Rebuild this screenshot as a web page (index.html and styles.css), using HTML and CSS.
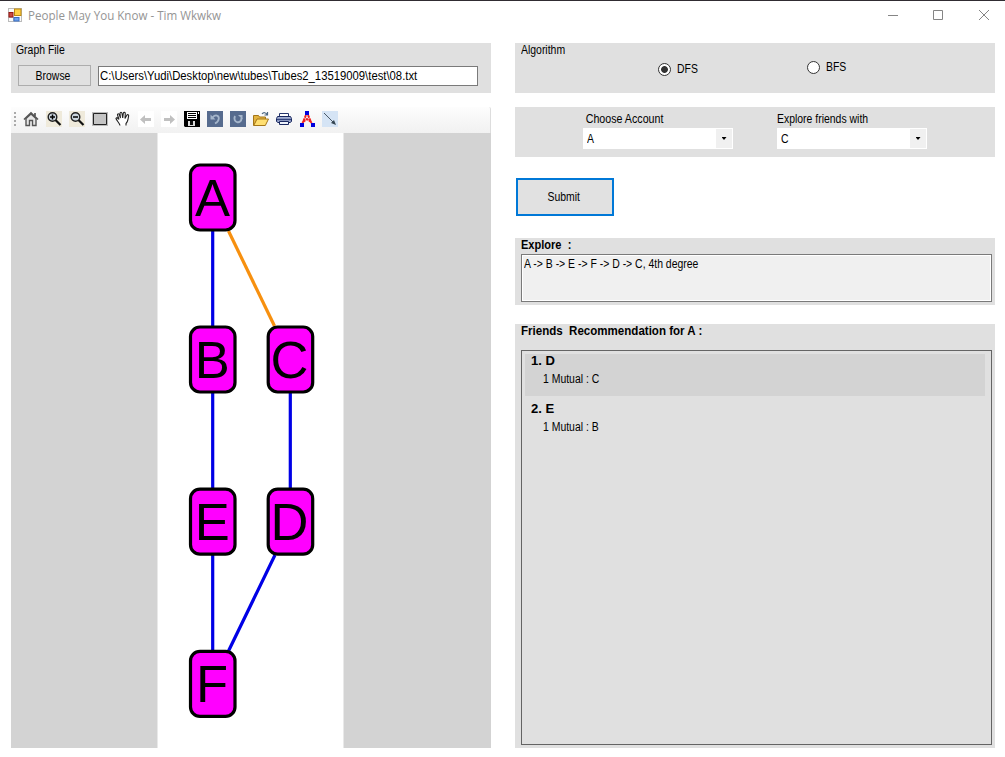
FILE: index.html
```html
<!DOCTYPE html>
<html lang="en">
<head>
<meta charset="utf-8">
<title>People May You Know - Tim Wkwkw</title>
<link rel="stylesheet" href="styles.css">
</head>
<body>
<div class="window">
  <header class="titlebar">
    <svg class="app-icon" width="14" height="14" viewBox="0 0 14 14">
      <rect x=".5" y=".5" width="13" height="13" fill="#fafafa" stroke="#bbb"/>
      <path d="M1 9.5h6M5.5 9v4" stroke="#bbb"/>
      <rect x="1" y="4.500" width="4" height="4.500" fill="#c84a42" stroke="#981914"/>
      <rect x="6.500" y="1" width="6.500" height="6.500" fill="#ffd044" stroke="#bd8911"/>
      <rect x="6" y="9.500" width="5" height="3.500" fill="#70a2ec" stroke="#396fc5"/>
    </svg>
    <h1 class="title"><span class="title-text">People May You Know - Tim Wkwkw</span></h1>
    <svg class="controls" width="104" height="12" viewBox="0 0 104 12" fill="none" stroke="#858585">
      <path d="M1 6.500h10M46.500 1.500h9v9h-9zM92 1l10 10M102 1L92 11"/>
    </svg>
  </header>

  <main class="content">
    <section class="left">
      <div class="panel file-panel">
        <div class="caption"><span class="t">Graph File</span></div>
        <div class="file-row">
          <button class="browse"><span class="t mid">Browse</span></button>
          <div class="path"><span class="t path-text">C:\Users\Yudi\Desktop\new\tubes\Tubes2_13519009\test\08.txt</span></div>
        </div>
      </div>
      <div class="viewer">
        <div class="toolbar">
          <svg class="grip" width="2" height="16" viewBox="0 0 2 16"><path d="M1 1v15" stroke="#aaa" stroke-width="2" stroke-dasharray="2 2"/></svg>
          <svg class="tool" viewBox="0 0 16 16"><path d="M3 7.500v7h3.500v-5h3v5H13v-7L8 3z" fill="#e6e6e6" stroke="#555" stroke-width="1.400"/><path d="M1 8.500L8 2l7 6.500M12 2v3" fill="none" stroke="#555" stroke-width="1.700"/></svg>
          <svg class="tool" viewBox="0 0 16 16"><path d="M0 0h16v16H0z" fill="#efeadb"/><circle cx="6.500" cy="6" r="4.300" fill="#ccd6df" stroke="#222" stroke-width="1.400"/><path d="M4 6h5M6.500 3.500v5" stroke="#000" stroke-width="1.500"/><path d="M9.500 9l5 5" stroke="#111" stroke-width="2.200"/></svg>
          <svg class="tool" viewBox="0 0 16 16"><path d="M0 0h16v16H0z" fill="#efeadb"/><circle cx="6.500" cy="6" r="4.300" fill="#ccd6df" stroke="#222" stroke-width="1.400"/><path d="M4 6h5" stroke="#000" stroke-width="1.500"/><path d="M9.500 9l5 5" stroke="#111" stroke-width="2.200"/></svg>
          <svg class="tool" viewBox="0 0 16 16"><path d="M0 1h16v14H0z" fill="#bbb"/><path d="M1.500 2.500h13v11h-13z" fill="#c4c4c4" stroke="#222"/></svg>
          <svg class="tool" viewBox="0 0 16 16"><path d="M5 14.500C4.500 12 1.500 9.500 1 7.500c.5-1.500 2-.5 3 1L2.500 4c0-1.700 1.600-1.700 2 0L5.500 7 5 2.500c.2-1.600 1.800-1.600 2 0L7.700 7l.6-4.700c.4-1.500 2-1.200 2 .4L10 7.500l1.800-3.200c.8-1.300 2.200-.6 1.800.8C13 8 13 11 11 12.500v2" fill="#fff" stroke="#222" stroke-width="1.100"/></svg>
          <svg class="tool" viewBox="0 0 16 16"><path d="M0 0h16v16H0z" fill="#fff"/><path d="M2 8.500L7 4v3h6v3H7v3z" fill="#c0c0c0"/></svg>
          <svg class="tool" viewBox="0 0 16 16"><path d="M0 0h16v16H0z" fill="#fff"/><path d="M14 8.500L9 4v3H3v3h6v3z" fill="#c0c0c0"/></svg>
          <svg class="tool" viewBox="0 0 16 16"><path d="M0 0h16v16H1l-1-1z" fill="#000"/><path d="M3 1h10v7H3z" fill="#fff"/><path d="M4 2.500h8M4 4.500h8M4 6.500h8" stroke="#000"/><path d="M4 10h7v5H4z" fill="#ddd"/><path d="M6 10h3v4H6z" fill="#111"/><path d="M14 1h1v2h-1z" fill="#fff"/></svg>
          <svg class="tool" viewBox="0 0 16 16"><path d="M0 0h16v16H0z" fill="#566b8e"/><path d="M3.500 3.500v5h5z" fill="#a5b6cb"/><path d="M5.500 6.500C8.500 3 12 4.500 11.800 7.500c-.1 2.500-1.800 4-3.800 5" fill="none" stroke="#a5b6cb" stroke-width="1.800"/></svg>
          <svg class="tool" viewBox="0 0 16 16"><path d="M0 0h16v16H0z" fill="#566b8e"/><path d="M5 5C2 11.500 11.500 14 11.500 7" fill="none" stroke="#a5b6cb" stroke-width="1.900"/><path d="M8 4h4.500v4.500z" fill="#a5b6cb"/></svg>
          <svg class="tool" viewBox="0 0 16 16"><path d="M.5 14.500v-10h5l1 1.500h6v3" fill="#e3b440" stroke="#a47618"/><path d="M.7 14.500L4 8h11.500l-3.200 6.500z" fill="#ffdf71" stroke="#a47618"/><path d="M9 3c1.500-2 4-1.500 5 .5M14.500 1v3h-3" fill="none" stroke="#4a6580" stroke-width="1.200"/></svg>
          <svg class="tool" viewBox="0 0 16 16"><path d="M3.500 6V2.500h9V6" fill="#fff" stroke="#27366c"/><path d="M1.500 5.500h13l1 2v3l-1.500 1H2l-1.500-1v-3z" fill="#a5b1d4" stroke="#18275f"/><path d="M1 8.500h14" stroke="#34457e" stroke-width="1.500"/><path d="M3.500 10.500h9v3h-9z" fill="#edf2fb" stroke="#18275f"/></svg>
          <svg class="tool" viewBox="0 0 16 16"><path d="M7 4L3.500 12M9 4l3.500 8M4 11l4-3 4 3" fill="none" stroke="#f02020" stroke-width="1.900" stroke-dasharray="3 .6"/><path d="M6 0h4v4H6zM1 12h4v4H1zM12 12h4v4h-4z" fill="#00d"/></svg>
          <svg class="tool" viewBox="0 0 16 16"><path d="M0 0h16v16H0z" fill="#d5e4f5"/><path d="M2 2l10 10" stroke="#4a5968"/><path d="M14 14l-5-2 3-3z" fill="#354653"/></svg>
        </div>
        <svg class="graph" width="480" height="615" viewBox="11 133 480 615">
          <path class="paper" d="M157.500 133h186v615h-186z"/>
          <path class="edge" d="M212.700 231v95M212.700 393v95M212.700 555v95M290.300 393v95M275 555L228.500 651"/>
          <path class="edge found" d="M228.500 231L274.500 326"/>
          <g class="node">
            <rect x="190.500" y="165" width="44.500" height="65" rx="9.500"/>
            <rect x="190.500" y="327" width="44.500" height="65" rx="9.500"/>
            <rect x="268.200" y="327" width="44.500" height="65" rx="9.500"/>
            <rect x="190.500" y="489.200" width="44.500" height="65" rx="9.500"/>
            <rect x="268.200" y="489.200" width="44.500" height="65" rx="9.500"/>
            <rect x="190.500" y="651.400" width="44.500" height="65" rx="9.500"/>
          </g>
          <g class="node-label">
            <text x="212.500" y="215.600">A</text>
            <text x="212.200" y="377.800">B</text>
            <text x="289.500" y="377.800">C</text>
            <text x="212.200" y="540">E</text>
            <text x="289.500" y="540">D</text>
            <text x="212" y="702">F</text>
          </g>
        </svg>
      </div>
    </section>

    <section class="right">
      <div class="panel algorithm">
        <div class="caption"><span class="t">Algorithm</span></div>
        <label class="option dfs"><i class="radio on"></i><span class="t">DFS</span></label>
        <label class="option bfs"><i class="radio"></i><span class="t">BFS</span></label>
      </div>
      <div class="panel accounts">
        <div class="field"><span class="t lbl inset">Choose Account</span><div class="combo"><span class="t">A</span><i class="drop"></i></div></div>
        <div class="field"><span class="t lbl">Explore friends with</span><div class="combo"><span class="t">C</span><i class="drop"></i></div></div>
      </div>
      <button class="submit"><span class="t mid">Submit</span></button>
      <div class="panel explore">
        <h2 class="heading"><span class="b tight">Explore&nbsp; :</span></h2>
        <div class="result"><span class="t">A -&gt; B -&gt; E -&gt; F -&gt; D -&gt; C, 4th degree</span></div>
      </div>
      <div class="panel friends">
        <h2 class="heading"><span class="b snug">Friends&nbsp; Recommendation for A :</span></h2>
        <div class="list">
          <div class="item selected"><div class="name"><span class="b wide">1. D</span></div><div class="mutual"><span class="t">1 Mutual : C</span></div></div>
          <div class="item"><div class="name"><span class="b wide">2. E</span></div><div class="mutual"><span class="t">1 Mutual : B</span></div></div>
        </div>
      </div>
    </section>
  </main>
</div>
</body>
</html>
```
FILE: styles.css
```css
* { box-sizing: border-box; }
body { margin: 0; background: #fff; color: #000; font: 12px/14px "Liberation Sans", Arial, sans-serif; }
.window { width: 1005px; height: 757px; border-top: 1px solid #302c32; overflow: hidden; }
.titlebar { height: 42px; padding: 7px 14px 0 8px; display: flex; align-items: flex-start; }
.app-icon { margin-right: 6px; }
.title { margin: 0; font: 12px/16px "Open Sans", "Noto Sans", sans-serif; color: #949494; flex: 1; }
.title-text { display: inline-block; transform: scaleX(.966); transform-origin: 0 50%; }
.controls { margin-top: 1px; }
.content { display: grid; grid-template-columns: 480px 480px; column-gap: 24px; padding-left: 11px; }
.left, .right { display: flex; flex-direction: column; }
.panel { background: #e0e0e0; }
.t { display: inline-block; white-space: nowrap; transform: scaleX(.87); transform-origin: 0 50%; }
.t.mid { transform-origin: 50% 50%; }
.t.path-text { transform: scaleX(.941); }
.b { display: inline-block; white-space: nowrap; font-weight: bold; transform-origin: 0 50%; }
.b.tight { transform: scaleX(.92); }
.b.snug { transform: scaleX(.962); }
.b.wide { transform: scaleX(1.09); }
.caption { height: 22px; padding-left: 5px; }
button { font: inherit; color: inherit; background: #e1e1e1; padding: 0; }

.file-panel { height: 50px; }
.file-row { display: flex; gap: 7px; padding-left: 7px; }
.browse { width: 73px; height: 21px; border: 1px solid #adadad; padding-right: 2px; }
.path { width: 380px; height: 20px; margin-top: 1px; border: 1px solid #7a7a7a; background: #fff; padding: 2px 0 0 1px; }
.viewer { margin-top: 14px; height: 641px; }
.toolbar { height: 26px; display: flex; align-items: center; gap: 7px; padding: 0 0 2px 3px; background: linear-gradient(#fdfdfd, #f1f1f1); border-right: 1px solid #ddd; border-top-right-radius: 2px; }
.tool { width: 16px; height: 16px; flex: none; }
.graph { display: block; background: #d3d3d3; }
.paper { fill: #fff; }
.edge { fill: none; stroke: #0000e6; stroke-width: 3.200; }
.edge.found { stroke: #f7900f; }
.node rect { fill: #f0f; stroke: #000; stroke-width: 3.200; }
.node-label text { font-size: 52.500px; text-anchor: middle; }

.algorithm { height: 50px; display: grid; grid-template-columns: 143px 149px 1fr; }
.algorithm .caption { padding-left: 6px; }
.option { display: flex; align-items: center; gap: 6px; height: 14px; margin-top: 19px; }
.option.bfs { margin-top: 17px; }
.radio { width: 13px; height: 13px; border: 1px solid #333; border-radius: 50%; background: #fff; }
.radio.on { background: radial-gradient(circle, #333 0 3px, #fff 3.800px); }
.accounts { height: 50px; margin-top: 14px; padding: 5px 0 0 68px; display: flex; gap: 44px; }
.field { width: 150px; }
.lbl { display: block; height: 16px; }
.lbl.inset { padding-left: 3px; transform: scaleX(.89); }
.combo { height: 21px; background: #fff; display: flex; justify-content: space-between; align-items: center; padding: 1px 1px 1px 4px; }
.drop { width: 16px; height: 19px; background: #f0f0f0; display: grid; place-items: center; }
.drop::after { content: ""; width: 5px; height: 3px; background: #000; clip-path: polygon(0 0, 100% 0, 50% 100%); }
.submit { width: 98px; height: 38px; margin: 21px 0 0 1px; border: 2px solid #0078d7; padding-right: 3px; }
.explore { height: 67px; margin-top: 22px; padding: 0 3px 0 6px; }
.heading { margin: 0; font: bold 12px/14px "Liberation Sans", Arial, sans-serif; height: 16px; }
.result { height: 48px; border: 1px solid #7a7a7a; box-shadow: inset 0 0 0 1px #fff; background: #f0f0f0; padding: 2px; }
.friends { height: 424px; margin-top: 19px; padding: 0 3px 0 6px; }
.friends .heading { height: 26px; }
.list { height: 395px; border: 1px solid #646464; padding: 3px; }
.item { width: 460px; height: 42px; margin-bottom: 6px; padding-left: 6px; }
.item.selected { background: #d3d3d3; }
.name { height: 18px; }
.mutual { padding-left: 12px; }
```
